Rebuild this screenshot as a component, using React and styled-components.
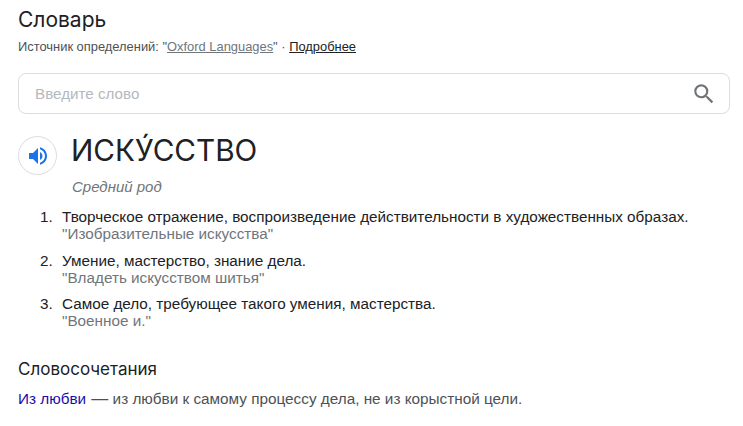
import React from 'react';
import styled, { createGlobalStyle } from "styled-components";

const definitions = [
  { text: "Творческое отражение, воспроизведение действительности в художественных образах.", example: "\"Изобразительные искусства\"" },
  { text: "Умение, мастерство, знание дела.", example: "\"Владеть искусством шитья\"" },
  { text: "Самое дело, требующее такого умения, мастерства.", example: "\"Военное и.\"" },
];

export default function App() {
  return (
    <Page>
      <GlobalStyle />
      <Title>Словарь</Title>
      <Source>
        Источник определений: "<SourceLink>Oxford Languages</SourceLink>" · <MoreLink>Подробнее</MoreLink>
      </Source>
      <SearchBox>
        <Placeholder>Введите слово</Placeholder>
        <svg width="26" height="26" viewBox="0 0 24 24" fill="#70757a">
          <path d="M15.5 14h-.79l-.28-.27A6.471 6.471 0 0 0 16 9.5 6.5 6.5 0 1 0 9.5 16c1.61 0 3.09-.59 4.23-1.57l.27.28v.79l5 4.99L20.49 19l-4.99-5zm-6 0C7.01 14 5 11.99 5 9.5S7.01 5 9.5 5 14 7.01 14 9.5 11.99 14 9.5 14z" />
        </svg>
      </SearchBox>
      <WordRow>
        <SpeakerButton>
          <svg width="24" height="24" viewBox="0 0 24 24" fill="#1a73e8">
            <path d="M3 9v6h4l5 5V4L7 9H3zm13.5 3c0-1.77-1.02-3.29-2.5-4.03v8.05c1.48-.73 2.5-2.25 2.5-4.02zM14 3.23v2.06c2.89.86 5 3.54 5 6.71s-2.11 5.85-5 6.71v2.06c4.01-.91 7-4.49 7-8.77s-2.99-7.86-7-8.77z" />
          </svg>
        </SpeakerButton>
        <Word>ИСКУ́ССТВО</Word>
      </WordRow>
      <Gender>Средний род</Gender>
      <Definitions>
        {definitions.map((d, i) => (
          <Definition key={d.text}>
            <Num>{i + 1}.</Num>
            <div>
              {d.text}
              <Example>{d.example}</Example>
            </div>
          </Definition>
        ))}
      </Definitions>
      <SubTitle>Словосочетания</SubTitle>
      <Phrase>
        <PhraseLink>Из любви</PhraseLink> <Dash>—</Dash> из любви к самому процессу дела, не из корыстной цели.
      </Phrase>
    </Page>
  );
}

const GlobalStyle = createGlobalStyle`
  html, body {
    margin: 0;
    background: #fff;
  }
`;

const Page = styled.div`
  width: 743px;
  height: 426px;
  box-sizing: border-box;
  padding: 7px 13px 0 18px;
  overflow: hidden;
  font-family: "Liberation Sans", Arial, sans-serif;
  font-size: 15.27px;
  color: #202124;
`;

const Title = styled.h2`
  margin: 0;
  font-family: Inter, sans-serif;
  font-size: 21px;
  line-height: 26px;
  font-weight: 400;
  color: #202124;
`;

const Source = styled.div`
  margin-top: 6px;
  font-size: 12.9px;
  line-height: 16px;
  color: #4d5156;
`;

const SourceLink = styled.a`
  color: #70757a;
  text-decoration: underline;
`;

const MoreLink = styled.a`
  color: #202124;
  text-decoration: underline;
`;

const SearchBox = styled.div`
  margin-top: 18px;
  height: 41px;
  box-sizing: border-box;
  border: 1px solid #dadce0;
  border-radius: 8px;
  padding: 0 12px 0 16px;
  display: flex;
  align-items: center;
  justify-content: space-between;
`;

const Placeholder = styled.span`
  font-size: 15.2px;
  color: #b5b8bc;
`;

const WordRow = styled.div`
  margin-top: 22px;
  display: flex;
  align-items: flex-start;
  gap: 14px;
`;

const SpeakerButton = styled.div`
  width: 39px;
  height: 39px;
  box-sizing: border-box;
  border: 1px solid #dadce0;
  border-radius: 50%;
  display: flex;
  align-items: center;
  justify-content: center;
`;

const Word = styled.div`
  margin-top: -4px;
  font-family: Inter, sans-serif;
  font-size: 29.7px;
  line-height: 36px;
  color: #202124;
`;

const Gender = styled.div`
  margin: 2px 0 0 54px;
  font-style: italic;
  font-size: 15px;
  line-height: 20px;
  color: #70757a;
`;

const Definitions = styled.ol`
  margin: 11px 0 0;
  padding: 0 0 0 22px;
  list-style: none;
`;

const Definition = styled.li`
  display: grid;
  grid-template-columns: 12px 1fr;
  column-gap: 10px;
  margin-bottom: 9.5px;
  line-height: 17px;
  color: #202124;
`;

const Num = styled.span`
  text-align: right;
`;

const Example = styled.div`
  color: #70757a;
`;

const SubTitle = styled.h3`
  margin: 28px 0 0;
  font-family: Inter, sans-serif;
  font-size: 17px;
  line-height: 24px;
  font-weight: 400;
  color: #202124;
`;

const Phrase = styled.div`
  margin-top: 8px;
  line-height: 20px;
  font-size: 15.3px;
  color: #4d5156;
`;

const PhraseLink = styled.a`
  color: #1a0dab;
  margin-right: 1px;
`;

const Dash = styled.span`
  font-size: 17px;
  line-height: 1;
`;
